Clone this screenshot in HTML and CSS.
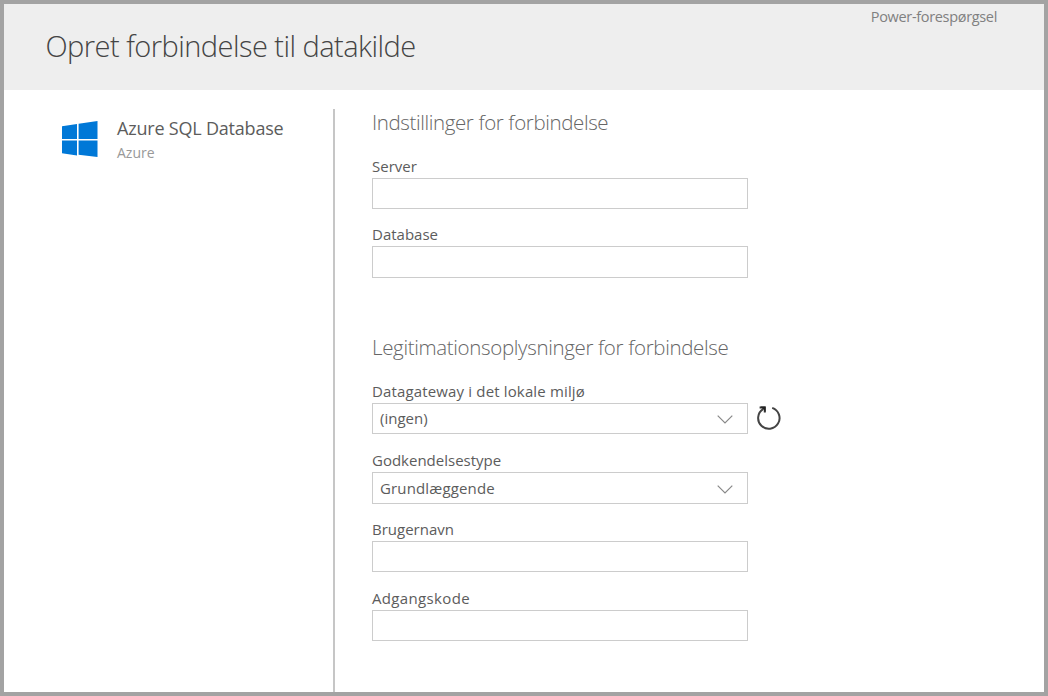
FILE: index.html
```html
<!DOCTYPE html>
<html lang="da">
<head>
<meta charset="utf-8">
<title>Opret forbindelse til datakilde</title>
<link rel="stylesheet" href="styles.css">
</head>
<body>
<div class="window">
  <header class="header">
    <h1 class="title">Opret forbindelse til datakilde</h1>
    <span class="product">Power-forespørgsel</span>
  </header>
  <div class="content">
    <aside class="source">
      <svg class="logo" width="36" height="37" viewBox="0 0 36 37">
        <path fill="#0078d7" d="M0 5.3 15 3v14.9H0zM16.6 2.7 35.5 0v17.9H16.6zM0 19.4h15v15L0 32.2zM16.6 19.4H35.5V36l-18.9-2.2z"/>
      </svg>
      <div class="source-text">
        <div class="source-name">Azure SQL Database</div>
        <div class="source-kind">Azure</div>
      </div>
    </aside>
    <main class="form">
      <section class="group">
        <h2 class="heading">Indstillinger for forbindelse</h2>
        <label class="field"><span class="label">Server</span><input class="box" type="text"></label>
        <label class="field"><span class="label">Database</span><input class="box tall" type="text"></label>
      </section>
      <section class="group">
        <h2 class="heading heading-long">Legitimationsoplysninger for forbindelse</h2>
        <div class="field">
          <span class="label wide">Datagateway i det lokale miljø</span>
          <div class="row">
            <div class="box select"><span>(ingen)</span>
              <svg class="drop" width="16" height="9" viewBox="0 0 16 9"><path class="chevron" d="M.7.7 8 8 15.3.7"/></svg>
            </div>
            <svg class="refresh" width="26" height="26" viewBox="0 0 26 26">
              <path class="ring" d="M7 4.1A10.7 10.7 0 1 0 16.2 2.9"/>
              <path class="arrow" d="M3.6 2.4H8.8V7.4"/>
              <path class="arrowhead" d="M4.5 1.5h5v5.3z"/>
            </svg>
          </div>
        </div>
        <div class="field">
          <span class="label">Godkendelsestype</span>
          <div class="box select tall"><span class="wide">Grundlæggende</span>
            <svg class="drop" width="16" height="9" viewBox="0 0 16 9"><path class="chevron" d="M.7.7 8 8 15.3.7"/></svg>
          </div>
        </div>
        <label class="field"><span class="label">Brugernavn</span><input class="box" type="text"></label>
        <label class="field"><span class="label wider">Adgangskode</span><input class="box" type="password"></label>
      </section>
    </main>
  </div>
</div>
</body>
</html>
```
FILE: styles.css
```css
* { box-sizing: border-box; }
body { margin: 0; font-family: "Open Sans", "Noto Sans", sans-serif; color: #5c5c5c; background: #fff; }
h1, h2 { margin: 0; font-weight: 300; }
.window { height: 696px; border: 4px solid #a3a3a3; display: flex; flex-direction: column; overflow: hidden; white-space: nowrap; }
.header { height: 86px; flex: none; background: #eee; display: flex; justify-content: space-between; padding: 0 47px 0 41.5px; }
.title { font-size: 29px; line-height: 40px; padding-top: 22px; color: #444; letter-spacing: -0.54px; }
.product { font-size: 14.5px; line-height: 20px; padding-top: 3px; color: #808080; letter-spacing: -0.33px; }
.content { flex: 1; display: flex; padding-top: 19px; }
.source { width: 331px; border-right: 2px solid #c6c6c6; display: flex; padding: 7px 0 0 58px; }
.logo { margin: 5px 19px 0 0; }
.source-name { font-size: 18px; line-height: 24px; letter-spacing: -0.2px; }
.source-kind { font-size: 14px; line-height: 26px; color: #999; }
.form { padding-left: 37px; }
.group { height: 225px; }
.heading { font-size: 20.5px; line-height: 26px; height: 46px; color: #666; letter-spacing: -0.38px; }
.heading-long { letter-spacing: -0.34px; }
.field { display: block; height: 55px; margin-bottom: 14px; }
.group:first-child .field { height: 54px; }
.label { display: block; font-size: 15px; line-height: 23px; height: 23px; }
.wide { letter-spacing: 0.15px; }
.wider { letter-spacing: 0.35px; }
.box { display: block; width: 376px; height: 31px; border: 1px solid #ccc; background: #fff; padding: 0 8px; outline: 0; }
.tall { height: 32px; }
.row { display: flex; gap: 8px; }
.select { display: flex; justify-content: space-between; align-items: center; padding: 0 14px 0 7px; font-size: 15px; line-height: 29px; }
.drop { margin-top: 2px; }
.chevron { fill: none; stroke: #888; stroke-width: 1.2; }
.refresh { margin-top: 2px; }
.ring { fill: none; stroke: #444; stroke-width: 2; }
.arrow { fill: none; stroke: #333; stroke-width: 2; }
.arrowhead { fill: #222; }
```
